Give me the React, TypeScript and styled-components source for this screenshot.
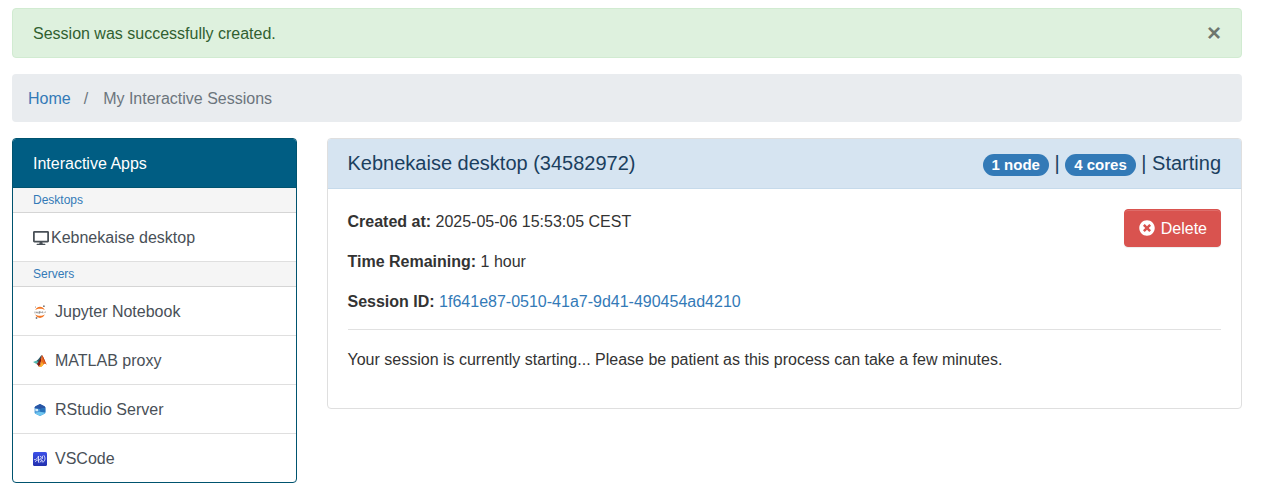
import React from "react";
import styled, { createGlobalStyle } from "styled-components";
import { FaDesktop, FaTimesCircle } from "react-icons/fa";

const GlobalStyle = createGlobalStyle`
  *, *::before, *::after { box-sizing: border-box; }
  body {
    margin: 0;
    background: #fff;
    color: #333;
    font-family: "Liberation Sans", Arial, sans-serif;
    font-size: 16px;
    line-height: 24px;
  }
`;

const Page = styled.div`
  display: flex;
  flex-direction: column;
  gap: 16px;
  padding: 8px 36px 20px 12px;
`;

const Alert = styled.div`
  display: flex;
  align-items: center;
  justify-content: space-between;
  padding: 13px 20px 11px;
  border: 1px solid #d1ebd1;
  border-radius: 4px;
  background: #def1de;
  color: #306030;
`;

const CloseButton = styled.button`
  padding: 0 0 2px;
  border: 0;
  background: none;
  color: #000;
  font: bold 24px/22px "Liberation Sans", Arial, sans-serif;
  text-shadow: 0 1px 0 #fff;
  opacity: 0.5;
  cursor: pointer;
`;

const Link = styled.a`
  color: #337ab7;
  text-decoration: none;
`;

const Breadcrumb = styled.ol`
  display: flex;
  margin: 0;
  padding: 13px 16px 11px;
  border-radius: 4px;
  background: #e9ecef;
  color: #6c757d;
  list-style: none;
`;

const Crumb = styled.li`
  & + &::before {
    content: "/";
    padding: 0 15px 0 13px;
  }
`;

const Columns = styled.div`
  display: flex;
  align-items: flex-start;
  gap: 30px;
`;

const Sidebar = styled.nav`
  flex: none;
  width: calc(25% - 23px);
  border: 1px solid #00536f;
  border-radius: 4px;
  overflow: hidden;
`;

const SidebarTitle = styled.div`
  padding: 13px 20px 11px;
  border-bottom: 1px solid #00536f;
  background: #005d83;
  color: #fff;
`;

const GroupTitle = styled.p`
  margin: 0;
  padding: 3px 20px;
  border-bottom: 1px solid #d5d5d5;
  background: #f5f5f5;
  color: #337ab7;
  font-size: 12px;
  line-height: 18px;
`;

const AppLink = styled.a<{ $tight?: boolean }>`
  display: flex;
  align-items: center;
  gap: ${(p) => (p.$tight ? 2 : 8)}px;
  padding: 13px 20px 11px;
  border-bottom: 1px solid #dfdfdf;
  color: #495057;
  text-decoration: none;
  &:last-child { border-bottom: 0; }
`;

const AppLogo = styled.svg`
  flex: none;
  width: 14px;
  height: 14px;
`;

const Card = styled.section`
  flex: 1;
  min-width: 0;
  border: 1px solid #dfdfdf;
  border-radius: 4px;
  overflow: hidden;
`;

const CardHeader = styled.header`
  display: flex;
  justify-content: space-between;
  padding: 12px 20px;
  border-bottom: 1px solid #c6daeb;
  background: #d6e4f1;
  color: #1b3f5f;
  font-size: 20px;
  line-height: 25px;
`;

const CardTitle = styled.h5`
  margin: 0;
  font: inherit;
`;

const Badge = styled.span`
  display: inline-block;
  padding: 3px 9px 4px;
  border-radius: 11px;
  background: #337ab7;
  color: #fff;
  font-size: 15px;
  font-weight: bold;
  line-height: 15px;
  vertical-align: baseline;
`;

const CardBody = styled.div`
  display: flex;
  flex-direction: column;
  gap: 15px;
  padding: 20px 20px 36px;
`;

const Summary = styled.div`
  display: flex;
  align-items: flex-start;
  justify-content: space-between;
`;

const Details = styled.div`
  display: flex;
  flex-direction: column;
  gap: 16px;
  padding-top: 1px;
`;

const Text = styled.p`
  margin: 0;
`;

const Rule = styled.hr`
  width: 100%;
  margin: 0 0 3px;
  border: 0;
  border-top: 1px solid #e1e1e1;
`;

const DeleteButton = styled.button`
  display: flex;
  align-items: center;
  gap: 6px;
  padding: 7px 13px 5px 14px;
  border: 1px solid #d9534f;
  border-radius: 4px;
  background: #d9534f;
  color: #fff;
  font: inherit;
  box-shadow: inset 0 1px 0 rgba(255, 255, 255, 0.15), 0 1px 1px rgba(0, 0, 0, 0.075);
  cursor: pointer;
  svg { margin-bottom: 2px; }
`;

const JupyterLogo = () => (
  <AppLogo viewBox="0 0 14 14" aria-hidden="true">
    <path d="M2.200 5.300C3 3 4.800 1.700 7 1.700s4 1.300 4.800 3.600C10.400 4.200 8.900 3.800 7 3.800s-3.400.4-4.800 1.500z" fill="#f37726" />
    <path d="M2.200 9.300c.8 2.300 2.600 3.600 4.800 3.600s4-1.300 4.800-3.600c-1.400 1.100-2.900 1.500-4.800 1.500s-3.400-.4-4.800-1.500z" fill="#f37726" />
    <path d="M2 6.500v1.900M3.500 6.700v1.200h1.300V6.700M6 8.900V6.700h1.200v1.200H6M8 6.700l.5 1.300M9.600 6.300v1.600h.8M11.900 7.900V6.900h.8" fill="none" stroke="#666" strokeWidth=".6" />
    <circle cx="10.900" cy="1.200" r=".9" fill="#767677" />
    <circle cx="2.500" cy="2" r=".6" fill="#888" />
    <circle cx="3.500" cy="13" r=".9" fill="#77787b" />
  </AppLogo>
);

const MatlabLogo = () => (
  <AppLogo viewBox="0 0 14 14" aria-hidden="true">
    <path d="M0 7.900 3.800 6.400 5.500 8 3.500 10z" fill="#50b8b0" />
    <path d="M3.800 6.400C5.700 6 6.800 2.200 9 1L6.800 7.200 5.500 8.800z" fill="#285a69" />
    <path d="M3.500 10 5.500 8 9 1C8.500 5 8 9.500 6 13 5.200 11.500 4.700 10.500 3.500 10z" fill="#7d1c12" />
    <path d="M9 1c1.500 1.600 2.900 6.500 5 10-1.200-1.300-2.300-1.700-3.700-.3C8.800 12.200 7.800 13.500 6 13 7.700 10 8.300 5 9 1z" fill="#e9691c" />
    <path d="M8.500 6.500C9 8.500 8.200 11 6 13c1.800.5 2.800-.8 4.300-2.300z" fill="#fbb831" />
    <path d="M9 1c1.500 1.600 2.900 6.500 5 10-1.700-1.800-3.500-5-5-10z" fill="#b52b12" />
  </AppLogo>
);

const RStudioLogo = () => (
  <AppLogo viewBox="0 0 14 14" aria-hidden="true">
    <path d="M7 1 11.500 3.200Q12.400 3.800 12.400 5v4.200Q12.400 10.200 11.500 10.800L7 13 2.500 10.800Q1.600 10.200 1.600 9.200V5Q1.600 3.800 2.500 3.200z" fill="#3e91d5" />
    <path d="M7 1 11.500 3.200Q12.400 3.800 12.400 5L7 6 1.600 5Q1.600 3.800 2.500 3.200z" fill="#2a55a4" />
    <path d="M7 6 12.400 5v4.200L7 9z" fill="#2672ba" />
    <path d="M2.200 9.800 7 8.800 11.800 9.800 11.500 10.800 7 13 2.500 10.800z" fill="#70c6ef" />
    <path d="M2.200 5.800 5 6 5.300 8.200 2.500 8.200z" fill="#d5ecfa" />
  </AppLogo>
);

const CodeServerLogo = () => (
  <AppLogo viewBox="0 0 14 14" aria-hidden="true">
    <defs>
      <linearGradient id="codeServerBlue" x1="0" y1="0" x2="0" y2="1">
        <stop offset="0" stopColor="#3c50e8" />
        <stop offset="1" stopColor="#2230ad" />
      </linearGradient>
    </defs>
    <rect width="14" height="14" rx="1.500" fill="url(#codeServerBlue)" />
    <path d="M1.500 7.700C3.300 7.800 4.500 6.500 5.500 4V10.200M2.200 9.500c1.300-1.300 3-1.800 5-1.800M7.300 4.200c1.500.4 1.400 1.900.2 2.700 1.600.6 1.300 2.700-.5 3.200M11 3.500c1.600 2.200 1.400 5-.8 6.700M9.400 4.200v2.300M9.200 8.500v1.500" fill="none" stroke="#e4e7ff" strokeWidth=".9" strokeLinecap="round" />
  </AppLogo>
);

const servers = [
  { name: "Jupyter Notebook", Logo: JupyterLogo },
  { name: "MATLAB proxy", Logo: MatlabLogo },
  { name: "RStudio Server", Logo: RStudioLogo },
  { name: "VSCode", Logo: CodeServerLogo },
];

export default function App() {
  return (
    <>
      <GlobalStyle />
      <Page>
        <Alert role="alert">
          <span>Session was successfully created.</span>
          <CloseButton type="button" aria-label="Close">×</CloseButton>
        </Alert>
        <Breadcrumb>
          <Crumb><Link href="#home">Home</Link></Crumb>
          <Crumb>My Interactive Sessions</Crumb>
        </Breadcrumb>
        <Columns>
          <Sidebar>
            <SidebarTitle>Interactive Apps</SidebarTitle>
            <GroupTitle>Desktops</GroupTitle>
            <AppLink href="#desktop" $tight>
              <FaDesktop size={16} aria-hidden="true" />
              Kebnekaise desktop
            </AppLink>
            <GroupTitle>Servers</GroupTitle>
            {servers.map(({ name, Logo }) => (
              <AppLink key={name} href="#server">
                <Logo />
                {name}
              </AppLink>
            ))}
          </Sidebar>
          <Card>
            <CardHeader>
              <CardTitle>Kebnekaise desktop (34582972)</CardTitle>
              <div>
                <Badge>1 node</Badge> | <Badge>4 cores</Badge> | Starting
              </div>
            </CardHeader>
            <CardBody>
              <Summary>
                <Details>
                  <Text><strong>Created at:</strong> 2025-05-06 15:53:05 CEST</Text>
                  <Text><strong>Time Remaining:</strong> 1 hour</Text>
                  <Text>
                    <strong>Session ID:</strong>{" "}
                    <Link href="#session">1f641e87-0510-41a7-9d41-490454ad4210</Link>
                  </Text>
                </Details>
                <DeleteButton type="button">
                  <FaTimesCircle size={16} aria-hidden="true" />
                  Delete
                </DeleteButton>
              </Summary>
              <Rule />
              <Text>Your session is currently starting... Please be patient as this process can take a few minutes.</Text>
            </CardBody>
          </Card>
        </Columns>
      </Page>
    </>
  );
}
